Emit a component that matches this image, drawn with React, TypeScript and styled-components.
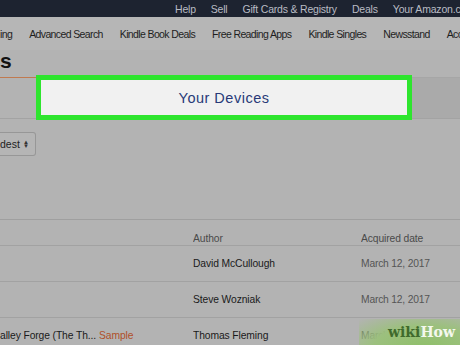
import React from "react";
import styled, { createGlobalStyle } from "styled-components";

const Global = createGlobalStyle`
  html, body { margin: 0; padding: 0; }
  body {
    width: 460px; height: 345px; overflow: hidden;
    background: #b3b3b3;
    font-family: "Liberation Sans", Arial, sans-serif;
  }
`;

const Shell = styled.div`
  width: 460px; height: 345px; overflow: hidden; position: relative;
  background: #b3b3b3;
`;

const TopBar = styled.div`
  height: 17px; background: #1d2330;
  display: flex; align-items: center;
  gap: 15px; padding-left: 175px; white-space: nowrap; overflow: hidden;
`;
const TopLink = styled.span`
  color: #b9bcc4; font-size: 10.5px; letter-spacing: -0.2px; flex-shrink: 0;
`;

const NavBar = styled.div`
  height: 33px; background: #b6b6b6;
  display: flex; align-items: center; gap: 17px;
  white-space: nowrap; overflow: hidden;
`;
const NavLink = styled.span`
  color: #1e1e1e; font-size: 10.5px; letter-spacing: -0.62px; flex-shrink: 0;
`;

const TitleRow = styled.div`
  height: 27px; display: flex; align-items: center;
  font-size: 21px; font-weight: bold; color: #111;
  margin-top: -3px;
`;

const Tabs = styled.div`
  height: 42px; display: flex; align-items: stretch; margin-top: 3px;
`;
const Tab = styled.div<{ $active?: boolean; $w: number }>`
  width: ${(p) => p.$w}px; flex-shrink: 0; box-sizing: border-box;
  border-top: 1px solid ${(p) => (p.$active ? "#c07a50" : "#a6a6a6")};
  border-bottom: 1px solid #a3a3a3;
  background: ${(p) => (p.$active ? "#b3b3b3" : "#aaaaaa")};
`;
const Highlight = styled.div`
  width: 376px; flex-shrink: 0; box-sizing: border-box;
  margin-top: -2px; height: 45px;
  border: 5px solid #2ee52e; background: #f1f1f1;
  display: flex; align-items: center; justify-content: center;
  color: #283a78; font-size: 14.5px; letter-spacing: 0.5px;
`;
const Rest = styled(Tab)`
  flex: 1;
`;

const SortRow = styled.div`
  padding-top: 13px; height: 100px; box-sizing: border-box;
`;
const Select = styled.div`
  width: 36px; height: 24px; box-sizing: border-box;
  border: 1px solid #979797; border-left: none; border-radius: 0 3px 3px 0;
  display: flex; align-items: center; justify-content: space-between;
  padding: 0 6px 0 0; font-size: 10.5px; color: #222;
  background: #b5b5b5;
`;
const Arrows = styled.span`
  font-size: 6px; line-height: 4px; display: flex; flex-direction: column; color: #333;
`;

const Table = styled.div`
  border-top: 1px solid #9f9f9f;
`;
const Row = styled.div<{ $head?: boolean }>`
  display: grid; grid-template-columns: 193px 168px 1fr;
  align-items: center; height: ${(p) => (p.$head ? 26 : 36)}px;
  border-bottom: 1px solid #a2a2a2; box-sizing: border-box;
  padding-top: ${(p) => (p.$head ? 11 : 0)}px;
  font-size: 10.3px; white-space: nowrap;
`;
const Cell = styled.span<{ $tone?: "head" | "main" | "date" }>`
  color: ${(p) => (p.$tone === "head" ? "#4a4a4a" : p.$tone === "date" ? "#555" : "#1a1a1a")};
  letter-spacing: ${(p) => (p.$tone === "date" ? "-0.2px" : "-0.1px")};
  overflow: hidden;
`;
const Sample = styled.span`
  color: #b0502a; margin-left: 3px;
`;

const Watermark = styled.div`
  position: absolute; right: 0; bottom: 0;
  width: 96px; height: 26px;
  background: radial-gradient(ellipse at 65% 110%, #8fbf6a 0%, #9cc07e 55%, rgba(160,190,130,0) 100%);
  display: flex; align-items: center; justify-content: flex-end; padding-right: 5px;
  font-family: "DejaVu Serif", "Liberation Serif", serif; font-weight: bold; font-size: 14px;
`;
const Wiki = styled.span` color: #3f6a2c; `;
const How = styled.span` color: #f4f8ee; `;

export default function App() {
  return (
    <Shell>
      <Global />
      <TopBar>
        <TopLink>Help</TopLink>
        <TopLink>Sell</TopLink>
        <TopLink>Gift Cards &amp; Registry</TopLink>
        <TopLink>Deals</TopLink>
        <TopLink>Your Amazon.com</TopLink>
      </TopBar>
      <NavBar>
        <NavLink>ing</NavLink>
        <NavLink>Advanced Search</NavLink>
        <NavLink>Kindle Book Deals</NavLink>
        <NavLink>Free Reading Apps</NavLink>
        <NavLink>Kindle Singles</NavLink>
        <NavLink>Newsstand</NavLink>
        <NavLink>Accessories</NavLink>
      </NavBar>
      <TitleRow>s</TitleRow>
      <Tabs>
        <Tab $active $w={36} />
        <Highlight>Your Devices</Highlight>
        <Rest $w={0} />
      </Tabs>
      <SortRow>
        <Select>
          dest
          <Arrows><span>▲</span><span>▼</span></Arrows>
        </Select>
      </SortRow>
      <Table>
        <Row $head>
          <Cell />
          <Cell $tone="head">Author</Cell>
          <Cell $tone="head">Acquired date</Cell>
        </Row>
        <Row>
          <Cell />
          <Cell>David McCullough</Cell>
          <Cell $tone="date">March 12, 2017</Cell>
        </Row>
        <Row>
          <Cell />
          <Cell>Steve Wozniak</Cell>
          <Cell $tone="date">March 12, 2017</Cell>
        </Row>
        <Row>
          <Cell>alley Forge (The Th...<Sample>Sample</Sample></Cell>
          <Cell>Thomas Fleming</Cell>
          <Cell $tone="date">March 12, 2017</Cell>
        </Row>
      </Table>
      <Watermark><Wiki>wiki</Wiki><How>How</How></Watermark>
    </Shell>
  );
}
